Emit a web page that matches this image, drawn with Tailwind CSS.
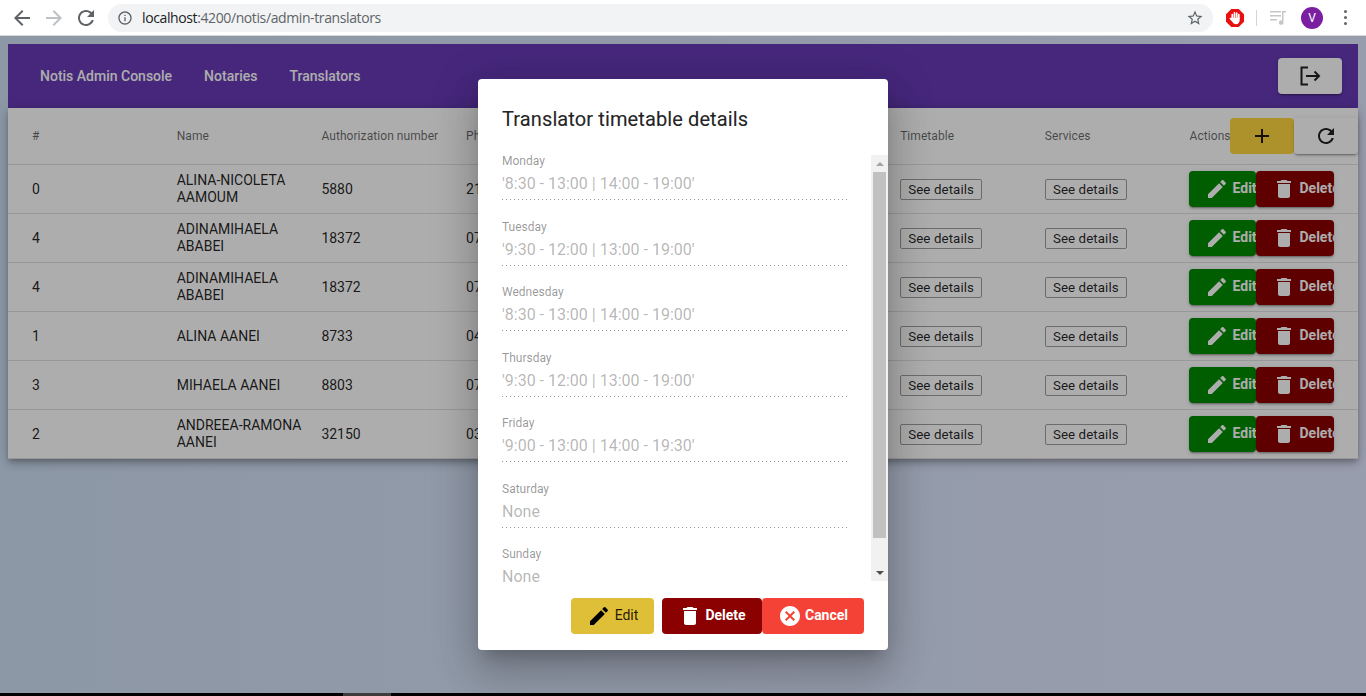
<!DOCTYPE html>
<html lang="en">
<head>
    <meta charset="UTF-8">
    <title>Notis Admin Console</title>
    <script src="https://cdn.jsdelivr.net/npm/@tailwindcss/browser@4"></script>
</head>
<body class="font-['Roboto',sans-serif] h-[696px] w-[1366px] overflow-hidden relative bg-black">
    <!-- browser toolbar -->
    <div class="h-[36px] bg-white border-b border-[#d6d8dc] flex items-center text-[#5f6368] relative z-30">
        <svg class="ml-[10px] w-[24px] h-[24px]" viewBox="0 0 24 24" fill="#5f6368"><path d="M20 11H7.830l5.590-5.590L12 4l-8 8 8 8 1.410-1.410L7.830 13H20v-2z"/></svg>
        <svg class="ml-[8px] w-[24px] h-[24px]" viewBox="0 0 24 24" fill="#bdc1c6"><path d="M12 4l-1.410 1.410L16.170 11H4v2h12.170l-5.580 5.590L12 20l8-8z"/></svg>
        <svg class="ml-[8px] w-[24px] h-[24px]" viewBox="0 0 24 24" fill="#5f6368"><path d="M17.650 6.350C16.200 4.900 14.210 4 12 4c-4.420 0-7.990 3.580-7.990 8s3.570 8 7.990 8c3.730 0 6.840-2.550 7.730-6h-2.080c-.82 2.330-3.040 4-5.650 4-3.310 0-6-2.690-6-6s2.690-6 6-6c1.660 0 3.140.69 4.220 1.780L13 11h7V4l-2.350 2.350z"/></svg>
        <div class="ml-[10px] w-[1105px] h-[28px] rounded-full bg-[#f1f3f4] flex items-center">
            <svg class="ml-[9px] w-[16px] h-[16px]" viewBox="0 0 24 24" fill="#5f6368"><path d="M11 7h2v2h-2zm0 4h2v6h-2zm1-9C6.480 2 2 6.480 2 12s4.480 10 10 10 10-4.480 10-10S17.520 2 12 2zm0 18c-4.410 0-8-3.590-8-8s3.590-8 8-8 8 3.590 8 8-3.590 8-8 8z"/></svg>
            <span class="ml-[9px] text-[14px] font-['Open_Sans',sans-serif] tracking-[-0.39px] text-[#5f6368]"><span class="text-[#202124]">localhost</span>:4200/notis/admin-translators</span>
            <svg class="ml-auto mr-[9px] w-[18px] h-[18px]" viewBox="0 0 24 24" fill="#5f6368"><path d="M22 9.240l-7.190-.62L12 2 9.190 8.630 2 9.240l5.460 4.730L5.820 21 12 17.270 18.180 21l-1.630-7.030L22 9.240zM12 15.400l-3.760 2.270 1-4.280-3.320-2.880 4.380-.38L12 6.100l1.710 4.040 4.380.38-3.320 2.880 1 4.280L12 15.400z"/></svg>
        </div>
        <svg class="ml-[13px] w-[18px] h-[18px]" viewBox="0 0 18 18"><path d="M5.300 0h7.400L18 5.300v7.400L12.700 18H5.300L0 12.700V5.300z" fill="#e8100f"/><path d="M6.300 9V5.600M8.500 8V3.800M10.700 8V4.200M12.800 9V5.600" stroke="#fff" stroke-width="1.700" stroke-linecap="round"/><path d="M5.500 8.500h8.200V11c0 2.600-1.500 4.200-3.700 4.200-1.700 0-2.800-.8-3.500-2.100L3.700 10c-.5-.9.700-1.600 1.300-.8z" fill="#fff"/></svg>
        <div class="ml-[12px] w-px h-[16px] bg-[#d3d5d8]"></div>
        <svg class="ml-[13px] w-[18px] h-[18px]" viewBox="0 0 18 18" fill="#c4c6c9"><path d="M0 2h11v1.500H0zM0 6h11v1.500H0zM0 10h7v1.500H0zM12 2h4v1.500h-2.500V13.500a2.300 2.300 0 1 1-1.500-2.100z"/></svg>
        <div class="ml-[13px] w-[22px] h-[22px] rounded-full bg-[#7b1fa2] text-white text-[12px] flex items-center justify-center">V</div>
        <div class="ml-[21px] flex flex-col gap-[3px]">
            <div class="w-[3px] h-[3px] rounded-full bg-[#5f6368]"></div>
            <div class="w-[3px] h-[3px] rounded-full bg-[#5f6368]"></div>
            <div class="w-[3px] h-[3px] rounded-full bg-[#5f6368]"></div>
        </div>
    </div>

    <!-- page -->
    <div class="h-[657px] px-[8px] pt-[8px] bg-gradient-to-r from-[#cfe0f4] to-[#e1e8ff]">
        <nav class="h-[64px] bg-[#673ab7] flex items-center pl-[32px] pr-[16px] text-white text-[14px] font-medium">
            <span>Notis Admin Console</span>
            <span class="ml-[32px]">Notaries</span>
            <span class="ml-[32px]">Translators</span>
            <button class="ml-auto w-[64px] h-[36px] bg-white rounded-[4px] shadow-[0_3px_1px_-2px_rgba(0,0,0,.2),0_2px_2px_0_rgba(0,0,0,.14),0_1px_5px_0_rgba(0,0,0,.12)] flex items-center justify-center">
                <svg class="w-[24px] h-[24px]" viewBox="0 0 24 24" fill="none" stroke="#000" stroke-opacity=".87" stroke-width="2"><path d="M10 3.500H3.500v17H10M8 12h13M16.500 7.500 21 12l-4.500 4.500"/></svg>
            </button>
        </nav>

        <div class="relative bg-white shadow-[0_3px_5px_-1px_rgba(0,0,0,.2),0_5px_8px_0_rgba(0,0,0,.14),0_1px_14px_0_rgba(0,0,0,.12)]">
            <div class="h-[57px] grid grid-cols-[repeat(8,144.7px)_1fr] items-center border-b border-black/12 pl-[24px] text-[12px] tracking-[0.07px] text-black/60">
                <div>#</div>
                <div>Name</div>
                <div>Authorization number</div>
                <div>Phone</div>
                <div></div>
                <div></div>
                <div>Timetable</div>
                <div>Services</div>
                <div>Actions</div>
            </div>
            <div class="absolute right-0 top-[10px] flex">
                <button class="w-[64px] h-[36px] bg-[#ffd740] rounded-[4px] flex items-center justify-center">
                    <svg class="w-[24px] h-[24px]" viewBox="0 0 24 24" fill="#000" fill-opacity=".87"><path d="M19 13h-6v6h-2v-6H5v-2h6V5h2v6h6v2z"/></svg>
                </button>
                <button class="w-[64px] h-[36px] bg-white rounded-[4px] shadow-[0_3px_1px_-2px_rgba(0,0,0,.2),0_2px_2px_0_rgba(0,0,0,.14),0_1px_5px_0_rgba(0,0,0,.12)] flex items-center justify-center">
                    <svg class="w-[24px] h-[24px]" viewBox="0 0 24 24" fill="#000" fill-opacity=".87"><path d="M17.650 6.350C16.200 4.900 14.210 4 12 4c-4.420 0-7.990 3.580-7.990 8s3.570 8 7.990 8c3.730 0 6.840-2.550 7.730-6h-2.080c-.82 2.330-3.040 4-5.650 4-3.310 0-6-2.690-6-6s2.690-6 6-6c1.660 0 3.140.69 4.220 1.780L13 11h7V4l-2.350 2.350z"/></svg>
                </button>
            </div>
            <div id="rows"></div>
        </div>
    </div>

    <!-- modal backdrop -->
    <div class="absolute left-0 top-[36px] w-[1366px] h-[657px] bg-black/32 z-10"></div>

    <!-- dialog -->
    <div class="absolute left-[478px] top-[79px] w-[410px] h-[571px] z-20 bg-white rounded-[4px] shadow-[0_11px_15px_-7px_rgba(0,0,0,.2),0_24px_38px_3px_rgba(0,0,0,.14),0_9px_46px_8px_rgba(0,0,0,.12)] pt-[24px] flex flex-col">
        <h2 class="pl-[24px] text-[20px] leading-[32px] text-black/87 tracking-[0.11px] [-webkit-text-stroke:0.2px_rgba(0,0,0,.6)]">Translator timetable details</h2>
        <div class="mt-[20px] h-[426px] flex items-start">
            <div id="days" class="w-[393px] h-[429px] pl-[24px] pr-[24px] overflow-hidden"></div>
            <div class="w-[17px] h-[426px] bg-[#f1f1f1] flex flex-col items-center">
                <div class="h-[17px] flex items-center justify-center">
                    <div class="w-0 h-0 border-x-[4px] border-x-transparent border-b-[4px] border-b-[#a3a3a3]"></div>
                </div>
                <div class="w-[13px] h-[366px] bg-[#c1c1c1]"></div>
                <div class="flex-1 flex items-end pb-[6px]">
                    <div class="w-0 h-0 border-x-[4px] border-x-transparent border-t-[4px] border-t-[#505050]"></div>
                </div>
            </div>
        </div>
        <div class="mt-[17px] pr-[24px] flex justify-end text-[14px]">
            <button class="w-[83px] h-[36px] mr-[8px] bg-[#e0bf38] rounded-[4px] flex items-center justify-center gap-[4px] text-black/87">
                <svg class="w-[24px] h-[24px]" viewBox="0 0 24 24" fill="#000"><path d="M3 17.250V21h3.750L17.810 9.940l-3.750-3.750L3 17.250zM20.710 7.040c.39-.39.39-1.020 0-1.410l-2.340-2.340c-.39-.39-1.020-.39-1.410 0l-1.830 1.830 3.750 3.750 1.830-1.830z"/></svg>
                <span class="-translate-y-px">Edit</span>
            </button>
            <button class="w-[100px] h-[36px] bg-[#8b0000] rounded-[4px] flex items-center justify-center gap-[3px] text-white font-bold">
                <svg class="w-[24px] h-[24px]" viewBox="0 0 24 24" fill="#fff"><path d="M6 19c0 1.100.9 2 2 2h8c1.100 0 2-.9 2-2V7H6v12zM19 4h-3.500l-1-1h-5l-1 1H5v2h14V4z"/></svg>
                <span class="-translate-y-px">Delete</span>
            </button>
            <button class="w-[102px] h-[36px] bg-[#f44336] rounded-[4px] flex items-center justify-center gap-[3px] text-white font-bold">
                <svg class="w-[24px] h-[24px]" viewBox="0 0 24 24" fill="#fff"><path d="M12 2C6.470 2 2 6.470 2 12s4.470 10 10 10 10-4.470 10-10S17.530 2 12 2zm5 13.590L15.590 17 12 13.410 8.410 17 7 15.590 10.590 12 7 8.410 8.410 7 12 10.590 15.590 7 17 8.410 13.410 12 17 15.590z"/></svg>
                <span class="-translate-y-px">Cancel</span>
            </button>
        </div>
    </div>

    <!-- horizontal scrollbar sliver at the bottom -->
    <div class="absolute left-[343px] top-[693px] w-[48px] h-[3px] bg-[#3d3d3d]"></div>

    <script>
        const translators = [
            ['0', 'ALINA-NICOLETA AAMOUM', '5880', '21'],
            ['4', 'ADINAMIHAELA ABABEI', '18372', '07'],
            ['4', 'ADINAMIHAELA ABABEI', '18372', '07'],
            ['1', 'ALINA AANEI', '8733', '04'],
            ['3', 'MIHAELA AANEI', '8803', '07'],
            ['2', 'ANDREEA-RAMONA AANEI', '32150', '03']
        ];
        const timetable = [
            ['Monday', "'8:30 - 13:00 | 14:00 - 19:00'"],
            ['Tuesday', "'9:30 - 12:00 | 13:00 - 19:00'"],
            ['Wednesday', "'8:30 - 13:00 | 14:00 - 19:00'"],
            ['Thursday', "'9:30 - 12:00 | 13:00 - 19:00'"],
            ['Friday', "'9:00 - 13:00 | 14:00 - 19:30'"],
            ['Saturday', 'None'],
            ['Sunday', 'None']
        ];

        const detailsButton = '<button class="block w-[82px] h-[21px] border border-[#a0a0a0] rounded-[2px] font-[\'Liberation_Sans\',sans-serif] text-[13.33px] leading-[19px] tracking-[0.08px]">See details</button>';

        document.getElementById('rows').innerHTML = translators.map(([id, name, auth, phone]) => `
            <div class="h-[49px] grid grid-cols-[repeat(8,144.7px)_1fr] items-center border-b border-black/12 pl-[24px] text-[14px] leading-[17px] text-black/87">
                <div>${id}</div>
                <div>${name}</div>
                <div>${auth}</div>
                <div>${phone}</div>
                <div></div>
                <div></div>
                <div>${detailsButton}</div>
                <div>${detailsButton}</div>
                <div class="flex -ml-[1px]">
                    <button class="shrink-0 w-[67px] h-[36px] bg-[#008b00] rounded-[4px] text-white font-bold overflow-hidden flex items-center pl-[16px] gap-[4px] shadow-[0_3px_1px_-2px_rgba(0,0,0,.2),0_2px_2px_0_rgba(0,0,0,.14),0_1px_5px_0_rgba(0,0,0,.12)]">
                        <svg class="shrink-0 w-[24px] h-[24px]" viewBox="0 0 24 24" fill="#fff"><path d="M3 17.250V21h3.750L17.810 9.940l-3.750-3.750L3 17.250zM20.710 7.040c.39-.39.39-1.020 0-1.410l-2.340-2.340c-.39-.39-1.020-.39-1.410 0l-1.830 1.830 3.750 3.750 1.830-1.830z"/></svg>
                        <span class="-translate-y-px">Edit</span>
                    </button>
                    <button class="shrink-0 w-[78px] h-[36px] bg-[#8b0000] rounded-[4px] text-white font-bold overflow-hidden flex items-center pl-[16px] gap-[4px] shadow-[0_3px_1px_-2px_rgba(0,0,0,.2),0_2px_2px_0_rgba(0,0,0,.14),0_1px_5px_0_rgba(0,0,0,.12)]">
                        <svg class="shrink-0 w-[24px] h-[24px]" viewBox="0 0 24 24" fill="#fff"><path d="M6 19c0 1.100.9 2 2 2h8c1.100 0 2-.9 2-2V7H6v12zM19 4h-3.500l-1-1h-5l-1 1H5v2h14V4z"/></svg>
                        <span class="-translate-y-px">Delete</span>
                    </button>
                </div>
            </div>`).join('');

        document.getElementById('days').innerHTML = timetable.map(([day, hours]) => `
            <div class="h-[65.5px]">
                <div class="text-[12px] leading-[12px] text-black/42">${day}</div>
                <div class="mt-[5px] h-[24px] text-[16px] leading-[24px] text-black/30">${hours}</div>
                <div class="mt-[3px] h-px bg-[linear-gradient(to_right,rgba(0,0,0,.42)_0,rgba(0,0,0,.42)_33%,transparent_0)] bg-[length:4px_1px]"></div>
            </div>`).join('');
    </script>
</body>
</html>
